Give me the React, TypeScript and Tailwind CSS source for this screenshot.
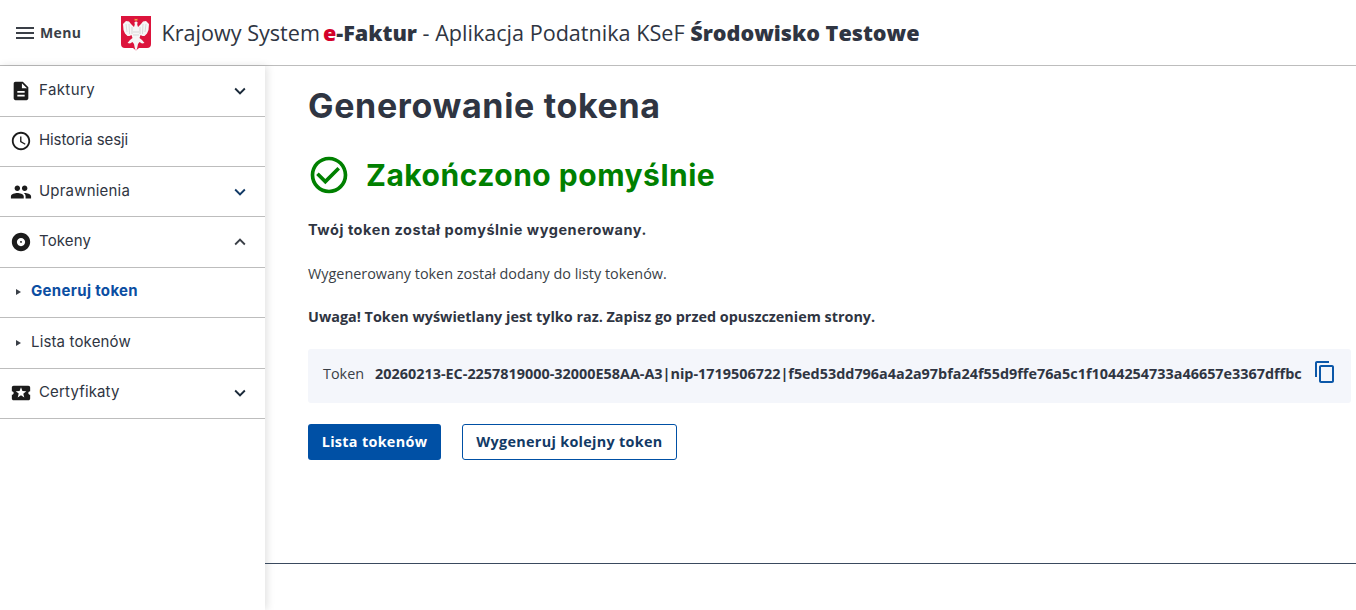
const open = "font-['Open_Sans',sans-serif]";
const mont = "font-['Inter',sans-serif]";

function Icon({ d, className }: { d: string; className: string }) {
  return (
    <svg viewBox="0 0 24 24" fill="currentColor" className={className}>
      <path d={d} />
    </svg>
  );
}

const P = {
  desc: "M14 2H6c-1.1 0-1.99.9-1.99 2L4 20c0 1.1.89 2 1.99 2H18c1.1 0 2-.9 2-2V8l-6-6zm2 16H8v-2h8v2zm0-4H8v-2h8v2zm-3-5V3.5L18.5 9H13z",
  clock: "M11.99 2C6.47 2 2 6.48 2 12s4.47 10 9.99 10C17.52 22 22 17.52 22 12S17.52 2 11.99 2zM12 20c-4.42 0-8-3.58-8-8s3.58-8 8-8 8 3.58 8 8-3.58 8-8 8zm.5-13H11v6l5.25 3.15.75-1.23-4.5-2.67z",
  people: "M16 11c1.66 0 2.99-1.34 2.99-3S17.66 5 16 5c-1.66 0-3 1.34-3 3s1.34 3 3 3zm-8 0c1.66 0 2.99-1.34 2.99-3S9.66 5 8 5C6.34 5 5 6.34 5 8s1.34 3 3 3zm0 2c-2.33 0-7 1.17-7 3.5V19h14v-2.5c0-2.33-4.67-3.5-7-3.5zm8 0c-.29 0-.62.02-.97.05 1.16.84 1.97 1.97 1.97 3.45V19h6v-2.5c0-2.33-4.67-3.5-7-3.5z",
  album: "M12 2C6.48 2 2 6.48 2 12s4.48 10 10 10 10-4.48 10-10S17.52 2 12 2zm0 14.5c-2.49 0-4.5-2.01-4.5-4.5S9.51 7.5 12 7.5s4.5 2.01 4.5 4.5-2.01 4.5-4.5 4.5zm0-5.5c-.55 0-1 .45-1 1s.45 1 1 1 1-.45 1-1-.45-1-1-1z",
  ticket: "M20 12c0-1.1.9-2 2-2V6c0-1.1-.9-2-2-2H4c-1.1 0-1.99.9-1.99 2v4c1.1 0 1.99.9 1.99 2s-.89 2-2 2v4c0 1.1.9 2 2 2h16c1.1 0 2-.9 2-2v-4c-1.1 0-2-.9-2-2zm-4.42 4.8L12 14.5l-3.58 2.3 1.08-4.12-3.29-2.69 4.24-.25L12 5.8l1.54 3.95 4.24.25-3.29 2.69 1.09 4.11z",
  copy: "M16 1H4c-1.1 0-2 .9-2 2v14h2V3h12V1zm3 4H8c-1.1 0-2 .9-2 2v14c0 1.1.9 2 2 2h11c1.1 0 2-.9 2-2V7c0-1.1-.9-2-2-2zm0 16H8V7h11v14z",
  menu: "M3 18h18v-2H3v2zm0-5h18v-2H3v2zm0-7v2h18V6H3z",
  check: "M16.59 7.58L10 14.17l-3.59-3.58L5 12l5 5 8-8zM12 2C6.48 2 2 6.48 2 12s4.48 10 10 10 10-4.48 10-10S17.52 2 12 2zm0 18c-4.42 0-8-3.58-8-8s3.58-8 8-8 8 3.58 8 8-3.58 8-8 8z",
  down: "M7.41 8.59L12 13.17l4.59-4.58L18 10l-6 6-6-6z",
  up: "M7.41 15.41L12 10.83l4.59 4.58L18 14l-6-6-6 6z",
};

function Emblem() {
  return (
    <svg viewBox="0 0 30 36" className="h-[36px] w-[30px] shrink-0">
      <path d="M0 0H30V28Q30 32 26 32H18L15 34.5L12 32H4Q0 32 0 28Z" fill="#dc143c" />
      <path d="M13.5 4.5L13.8 2.6L15 3.4L16.2 2.6L16.5 4.5Z" fill="#f2c14e" />
      <path d="M13.4 6.5Q15 4.5 16.6 6.2L16.2 8.6L17 11L20 8L22 5.5L25 5L28 8L27.5 14L26 17.5L23.5 20L21.5 20L19.5 19L18.5 22L21 24L23.5 27L21 27.5L18.5 26L17 28L16 33L15 35L14 33L13 28L11.5 26L9 27.5L6.5 27L9 24L11.5 22L10.5 19L8.5 20L6.5 20L4 17.5L2.5 14L2 8L5 5L8 5.5L10 8L13 11L13.8 8.6Z" fill="#f6f6f6" />
      <path d="M5 8L6 16M8 8L8.5 18M11 11L11 18M25 8L24 16M22 8L21.5 18M19 11L19 18M12 16H18M12 19H18" stroke="#c4c4c4" strokeWidth="0.6" fill="none" />
    </svg>
  );
}

function Row({ icon, label, chevron, chevronCls = "text-[#1b2a3a]", tracking = "tracking-[0.15px]" }: { icon: string; label: string; chevron?: "up" | "down"; chevronCls?: string; tracking?: string }) {
  return (
    <div className="box-content flex h-[49.4px] items-center border-b border-[#bdbdbd] pl-[9px] pr-[14px]">
      <span className="flex w-[24px] justify-center text-[#1c1c1c]">
        <Icon d={icon} className="h-[22px] w-[22px]" />
      </span>
      <span className={`mb-[1.5px] ml-[6px] flex-1 text-[15px] text-[#2f3542] ${tracking} ${mont}`}>{label}</span>
      {chevron && <Icon d={chevron === "up" ? P.up : P.down} className={`h-[22px] w-[22px] ${chevronCls}`} />}
    </div>
  );
}

function SubRow({ label, active }: { label: string; active?: boolean }) {
  return (
    <div className="box-content flex h-[49.4px] items-center border-b border-[#bdbdbd] pl-[16px]">
      <span className="h-0 w-0 border-y-[3px] border-l-[5px] border-y-transparent border-l-[#3a3f47]" />
      <span className={`mb-[1.5px] ml-[10px] text-[15px] ${mont} ${active ? "font-bold tracking-[0.33px] text-[#0b4ea2]" : "tracking-[0.15px] text-[#2f3542]"}`}>{label}</span>
    </div>
  );
}

export default function App() {
  return (
    <div className={`flex h-[610px] w-[1356px] flex-col overflow-hidden bg-white ${open}`}>
      <header className="flex h-[66px] shrink-0 items-center border-b border-[#bdbdbd] pl-[13px]">
        <Icon d={P.menu} className="h-[24px] w-[24px] text-[#3a3f47]" />
        <span className="ml-[3px] text-[14px] font-bold tracking-[0.4px] text-[#3a3f47]">Menu</span>
        <span className="ml-[40px] mt-[3px]"><Emblem /></span>
        <div className="ml-[10px] mt-[1px] whitespace-nowrap text-[21.6px] text-[#2f3542]">
          Krajowy System
          <span className="ml-[3px] font-extrabold text-[#d4002a]">e</span>
          <span className="font-extrabold">-Faktur</span>
          <span> - Aplikacja Podatnika KSeF </span>
          <span className="font-extrabold">Środowisko Testowe</span>
        </div>
      </header>
      <div className="flex flex-1">
        <aside className="w-[265px] shrink-0 pt-[0.2px] shadow-[2px_0_8px_rgba(0,0,0,0.12)]">
          <Row icon={P.desc} label="Faktury" chevron="down" tracking="tracking-[0.4px]" />
          <Row icon={P.clock} label="Historia sesji" tracking="tracking-[-0.1px]" />
          <Row icon={P.people} label="Uprawnienia" chevron="down" chevronCls="text-[#123a66]" tracking="tracking-[0.2px]" />
          <Row icon={P.album} label="Tokeny" chevron="up" chevronCls="text-[#3a3f47]" />
          <SubRow label="Generuj token" active />
          <SubRow label="Lista tokenów" />
          <Row icon={P.ticket} label="Certyfikaty" chevron="down" />
        </aside>
        <main className="flex flex-1 flex-col">
          <div className="h-[497px] pl-[43px] pr-[5px]">
            <h1 className={`mt-[20px] text-[34px] font-bold leading-[40px] tracking-[0.65px] text-[#2f3542] ${mont}`}>Generowanie tokena</h1>
            <div className="mt-[27px] flex items-center">
              <Icon d={P.check} className="ml-[-1px] h-[44px] w-[44px] text-[#008000]" />
              <span className={`ml-[15px] text-[30px] font-bold leading-[44px] tracking-[0.5px] text-[#008000] ${mont}`}>Zakończono pomyślnie</span>
            </div>
            <p className={`mt-[23px] text-[14.5px] font-bold leading-[20px] tracking-[0.55px] text-[#2f3542] ${mont}`}>Twój token został pomyślnie wygenerowany.</p>
            <p className="mt-[24px] text-[14.4px] leading-[20px] text-[#3a3f47]">Wygenerowany token został dodany do listy tokenów.</p>
            <p className="mt-[23px] text-[14.4px] font-bold leading-[20px] text-[#2f3542]">Uwaga! Token wyświetlany jest tylko raz. Zapisz go przed opuszczeniem strony.</p>
            <div className="mt-[22px] flex h-[54px] items-center whitespace-nowrap rounded-[3px] bg-[#f4f6fb] pb-[4px] pl-[15px]">
              <span className="text-[14.4px] text-[#3a3f47]">Token</span>
              <span className="ml-[11px] text-[14.4px] font-bold text-[#2f3542]">20260213-EC-2257819000-32000E58AA-A3|nip-1719506722|f5ed53dd796a4a2a97bfa24f55d9ffe76a5c1f1044254733a46657e3367dffbc</span>
              <Icon d={P.copy} className="mb-[4px] ml-[11px] h-[24px] w-[24px] text-[#0b57a8]" />
            </div>
            <div className="mt-[21px] flex gap-[21px]">
              <button className="h-[36px] w-[133px] rounded-[3px] bg-[#0050a5] text-[14.4px] font-bold tracking-[0.3px] text-white">Lista tokenów</button>
              <button className="h-[36px] w-[215px] rounded-[3px] border border-[#0050a5] bg-white text-[14.4px] font-bold tracking-[0.3px] text-[#123a66]">Wygeneruj kolejny token</button>
            </div>
          </div>
          <div className="border-t border-[#3a4a5e]" />
        </main>
      </div>
    </div>
  );
}
